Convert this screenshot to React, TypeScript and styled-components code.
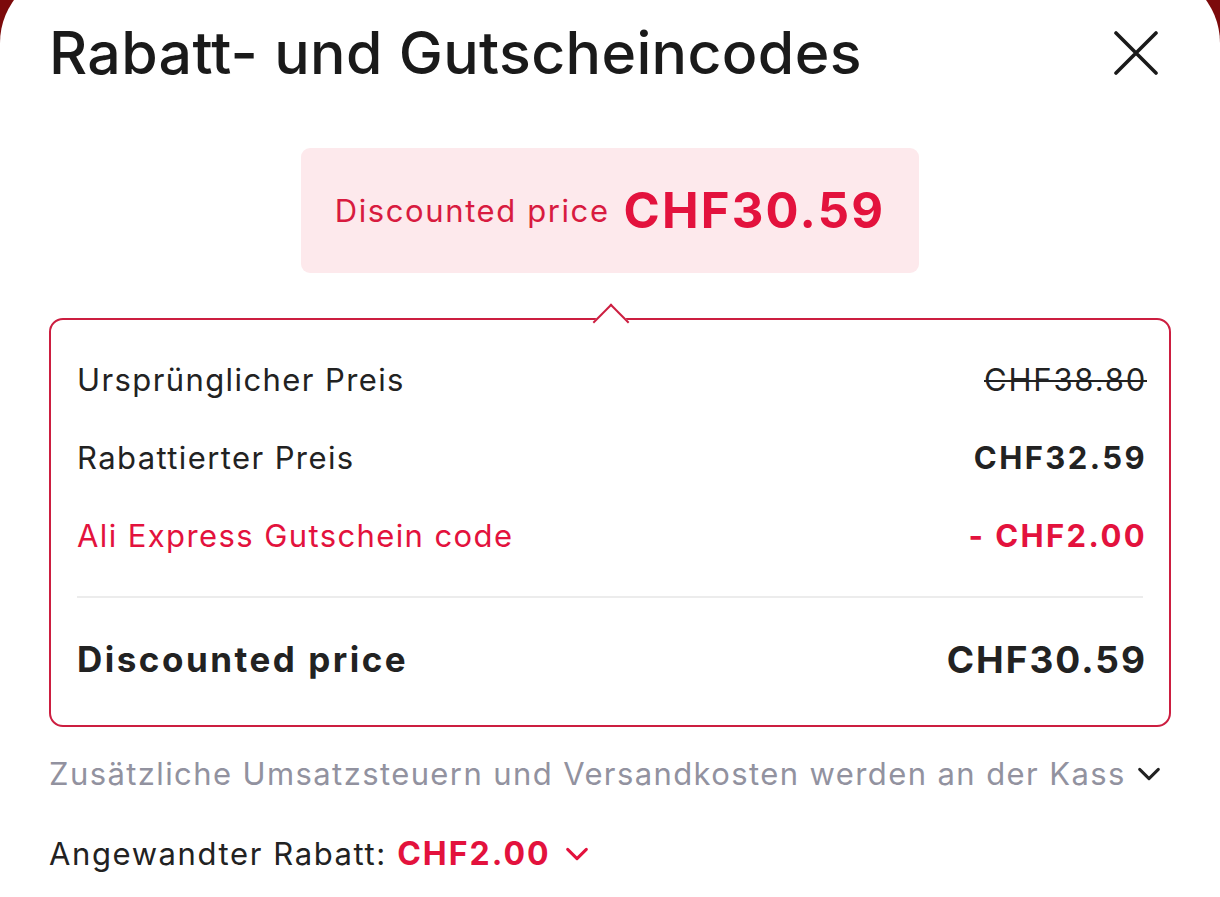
import React from "react";
import styled, { createGlobalStyle } from "styled-components";

const GlobalStyle = createGlobalStyle`
  html, body { margin: 0; padding: 0; }
  body {
    background: #7c0a0b;
    font-family: "Inter", "Noto Sans", sans-serif;
    overflow: hidden;
  }
`;

const Sheet = styled.div`
  margin-top: -30px;
  background: #ffffff;
  border-radius: 73px 73px 0 0;
  min-height: 927px;
  padding: 53px 49px 0 49px;
  box-sizing: border-box;
`;

const Header = styled.div`
  display: flex;
  align-items: center;
  justify-content: space-between;
  height: 60px;
`;

const Title = styled.h1`
  margin: 0;
  font-family: "Inter", sans-serif;
  font-weight: 500;
  font-size: 59px;
  letter-spacing: 0.35px;
  color: #1a1a1a;
  line-height: 60px;
`;

const CloseButton = styled.button`
  border: none;
  background: none;
  padding: 0;
  width: 44px;
  height: 44px;
  margin-right: 13px;
  display: flex;
  align-items: center;
  justify-content: center;
`;

const BadgeRow = styled.div`
  display: flex;
  justify-content: center;
  margin-top: 65px;
`;

const Badge = styled.div`
  width: 618px;
  height: 125px;
  box-sizing: border-box;
  background: #fde9ec;
  border-radius: 9px;
  display: flex;
  align-items: center;
  justify-content: center;
  gap: 14px;
  color: #e3123d;
`;

const BadgeLabel = styled.span`
  font-size: 31px;
  font-weight: 400;
  letter-spacing: 1.6px;
  color: #d81b40;
`;

const BadgeValue = styled.span`
  font-size: 49px;
  font-weight: 700;
  letter-spacing: 2.2px;
`;

const Card = styled.div`
  position: relative;
  margin-top: 45px;
  border: 2px solid #cc1e40;
  border-radius: 14px;
  padding: 20px 22px 21px 26px;
  display: flex;
  flex-direction: column;
`;

const Notch = styled.div`
  position: absolute;
  top: -11px;
  left: 50%;
  width: 24px;
  height: 24px;
  margin-left: -12px;
  background: #fff;
  border-top: 2px solid #cc1e40;
  border-left: 2px solid #cc1e40;
  transform: rotate(45deg);
`;

const Row = styled.div<{ $tone?: "red" | "normal" }>`
  display: flex;
  justify-content: space-between;
  align-items: center;
  height: 78px;
  font-size: 31px;
  letter-spacing: 1.4px;
  color: ${(p) => (p.$tone === "red" ? "#e3123d" : "#222222")};
`;

const Value = styled.span<{ $strike?: boolean }>`
  font-weight: ${(p) => (p.$strike ? 400 : 700)};
  letter-spacing: ${(p) => (p.$strike ? "1.8px" : "2.4px")};
  text-decoration: ${(p) => (p.$strike ? "line-through" : "none")};
  text-decoration-thickness: 2px;
`;

const Divider = styled.div`
  height: 2px;
  background: #ececec;
  margin: 22px 4px 16px 0;
`;

const TotalRow = styled.div`
  display: flex;
  justify-content: space-between;
  align-items: center;
  height: 90px;
  font-size: 35px;
  font-weight: 700;
  letter-spacing: 2.5px;
  color: #222222;
`;

const TotalValue = styled.span`
  font-weight: 700;
  font-size: 37px;
  letter-spacing: 2px;
`;

const NoteRow = styled.div`
  display: flex;
  align-items: center;
  justify-content: space-between;
  margin-top: 28px;
  font-size: 31px;
  letter-spacing: 1.4px;
  color: #92929f;
  padding-right: 8px;
`;

const AppliedRow = styled.div`
  display: flex;
  align-items: center;
  margin-top: 42px;
  font-size: 31px;
  letter-spacing: 1.6px;
  color: #222222;
  gap: 12px;
`;

const AppliedValue = styled.span`
  color: #e3123d;
  font-weight: 700;
  font-size: 32px;
  letter-spacing: 2px;
`;

const Chevron = ({ color, size }: { color: string; size: number }) => (
  <svg width={size} height={size} viewBox="0 0 24 24" fill="none">
    <path d="M4 8l8 8 8-8" stroke={color} strokeWidth="2.6" strokeLinecap="round" strokeLinejoin="round" />
  </svg>
);

export default function App() {
  return (
    <>
      <GlobalStyle />
      <Sheet>
        <Header>
          <Title>Rabatt- und Gutscheincodes</Title>
          <CloseButton aria-label="close">
            <svg width="44" height="44" viewBox="0 0 44 44" fill="none">
              <path d="M2 2L42 42M42 2L2 42" stroke="#1a1a1a" strokeWidth="3.6" strokeLinecap="round" />
            </svg>
          </CloseButton>
        </Header>
        <BadgeRow>
          <Badge>
            <BadgeLabel>Discounted price</BadgeLabel>
            <BadgeValue>CHF30.59</BadgeValue>
          </Badge>
        </BadgeRow>
        <Card>
          <Notch />
          <Row>
            <span>Ursprünglicher Preis</span>
            <Value $strike>CHF38.80</Value>
          </Row>
          <Row>
            <span>Rabattierter Preis</span>
            <Value>CHF32.59</Value>
          </Row>
          <Row $tone="red">
            <span>Ali Express Gutschein code</span>
            <Value>- CHF2.00</Value>
          </Row>
          <Divider />
          <TotalRow>
            <span>Discounted price</span>
            <TotalValue>CHF30.59</TotalValue>
          </TotalRow>
        </Card>
        <NoteRow>
          <span>Zusätzliche Umsatzsteuern und Versandkosten werden an der Kass</span>
          <Chevron color="#222" size={28} />
        </NoteRow>
        <AppliedRow>
          <span>Angewandter Rabatt: <AppliedValue>CHF2.00</AppliedValue></span>
          <Chevron color="#e3123d" size={28} />
        </AppliedRow>
      </Sheet>
    </>
  );
}
